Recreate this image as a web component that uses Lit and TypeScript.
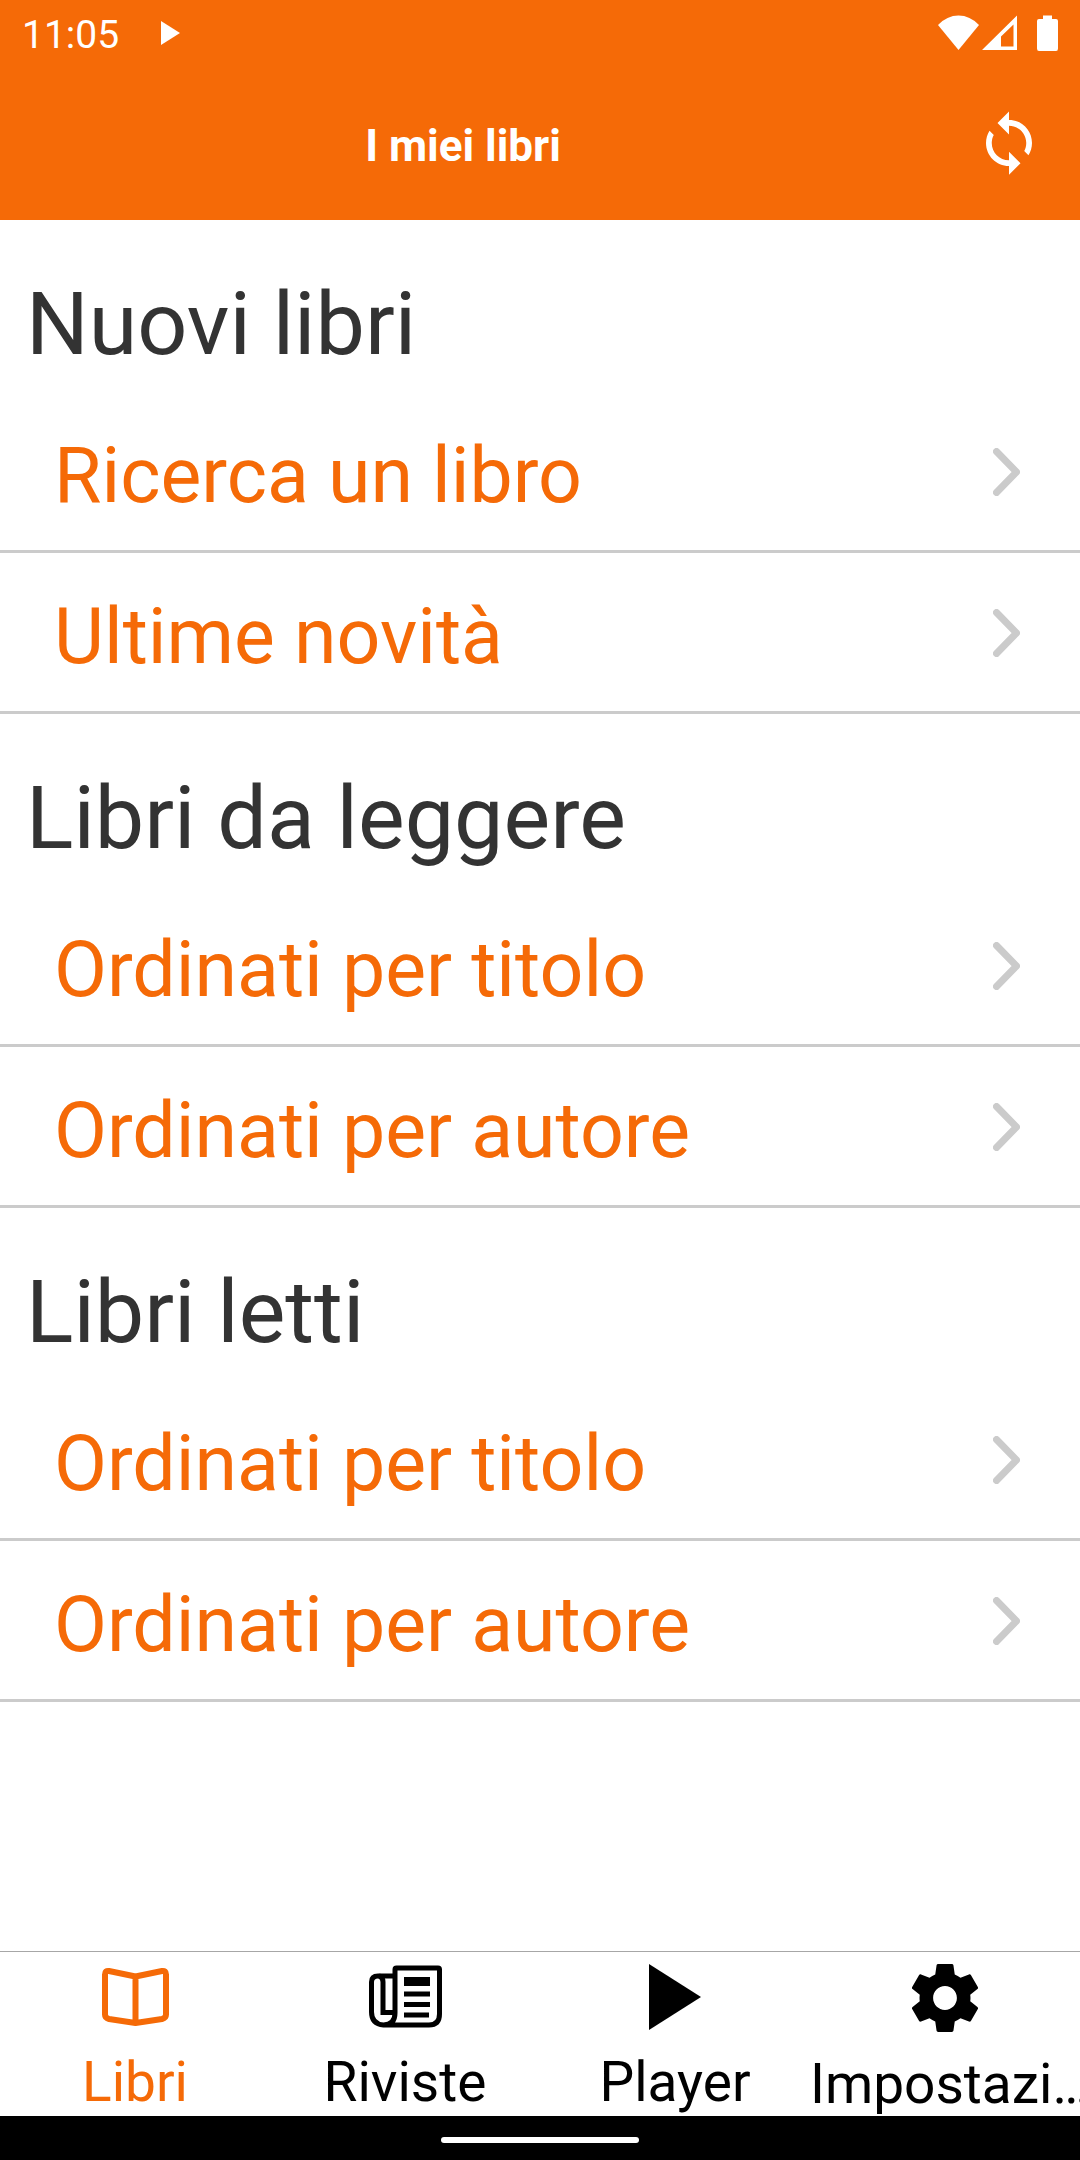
import { LitElement, html, css } from "lit";
import { customElement, state } from "lit/decorators.js";

interface Section {
  title: string;
  items: string[];
}

const SECTIONS: Section[] = [
  { title: "Nuovi libri", items: ["Ricerca un libro", "Ultime novità"] },
  { title: "Libri da leggere", items: ["Ordinati per titolo", "Ordinati per autore"] },
  { title: "Libri letti", items: ["Ordinati per titolo", "Ordinati per autore"] },
];

const bookIcon = html`<svg width="67" height="68" viewBox="0 0 67 68" fill="none" stroke="currentColor" stroke-width="6" stroke-linejoin="round" aria-hidden="true">
  <path d="M33.500 13.500 L7 8 Q3 7.500 3 11.500 V51.500 Q3 55 7 56 L33.500 60 L60 56 Q64 55 64 51.500 V11.500 Q64 7.500 60 8 Z M33.500 13.500 V60"/>
</svg>`;

const newsIcon = html`<svg width="73" height="68" viewBox="0 0 73 68" fill="none" stroke="currentColor" stroke-width="5" aria-hidden="true">
  <path d="M26 13 V6.500 Q26 5 27.500 5 H69 Q70.500 5 70.500 6.500 V51 Q70.500 62 60 62 H14.500 Q2.500 61 2.500 49 V19 Q2.500 13 9 13 H26 V50 Q26 61.500 14.500 62"/>
  <path d="M10 13 Q14 14 14 19 V49.500 H26"/>
  <path d="M35 18.500 H61" stroke-width="9"/>
  <path d="M35 31 H61 M35 41.500 H61 M35 52 H60"/>
</svg>`;

const playIcon = html`<svg width="52" height="68" viewBox="0 0 52 68" fill="currentColor" aria-hidden="true">
  <path d="M0 1 L52 34 L0 67 Z"/>
</svg>`;

const gearIcon = html`<svg width="68" height="70" viewBox="2 1.700 20 20.600" fill="currentColor" aria-hidden="true">
  <path d="M19.430 12.980c.04-.32.07-.64.07-.98s-.03-.66-.07-.98l2.110-1.650c.19-.15.24-.42.12-.64l-2-3.460c-.12-.22-.39-.3-.61-.22l-2.490 1c-.52-.4-1.080-.73-1.690-.98l-.38-2.650C14.460 2.180 14.250 2 14 2h-4c-.25 0-.46.18-.49.42l-.38 2.650c-.61.25-1.170.59-1.690.98l-2.490-1c-.23-.09-.49 0-.61.22l-2 3.460c-.13.22-.07.49.12.64l2.110 1.650c-.04.32-.07.65-.07.98s.03.66.07.98l-2.110 1.650c-.19.15-.24.42-.12.64l2 3.460c.12.22.39.3.61.22l2.490-1c.52.4 1.080.73 1.690.98l.38 2.650c.03.24.24.42.49.42h4c.25 0 .46-.18.49-.42l.38-2.650c.61-.25 1.170-.59 1.690-.98l2.490 1c.23.09.49 0 .61-.22l2-3.460c.12-.22.07-.49-.12-.64l-2.110-1.650zM12 15.500c-1.930 0-3.500-1.570-3.500-3.500s1.570-3.500 3.500-3.500 3.500 1.570 3.500 3.500-1.570 3.500-3.500 3.500z"/>
</svg>`;

const TABS = [
  { label: "Libri", icon: bookIcon },
  { label: "Riviste", icon: newsIcon },
  { label: "Player", icon: playIcon },
  { label: "Impostazi…", icon: gearIcon },
];

@customElement("status-bar")
class StatusBar extends LitElement {
  static styles = css`
    :host {
      display: flex;
      align-items: center;
      height: 66px;
      padding: 0 22px;
      font-size: 39px;
      line-height: 48px;
    }
    .clock {
      padding-top: 3px;
    }
    .play {
      margin-left: 42px;
    }
    .signals {
      display: flex;
      margin-left: auto;
    }
    svg {
      display: block;
    }
  `;

  render() {
    return html`
      <span class="clock">11:05</span>
      <svg class="play" width="20" height="24" viewBox="0 0 20 24" fill="currentColor" aria-hidden="true"><path d="M0 0 L19 12 L0 24 Z"/></svg>
      <svg class="signals" width="121" height="36" viewBox="0 0 121 36" fill="currentColor" aria-hidden="true">
        <path d="M1 10 Q10 0.500 21.500 0.500 Q33 0.500 42 10 L21.500 35 Z"/>
        <path fill-rule="evenodd" d="M45 35 L80 0.500 V35 Z M64 21.500 V31.500 H76.500 V9.500 Z"/>
        <path d="M106 0.500 H115 V4 H119 Q121 4 121 6 V33.500 Q121 36 119 36 H102 Q100 36 100 33.500 V6 Q100 4 102 4 H106 Z"/>
      </svg>
    `;
  }
}

@customElement("book-section")
class BookSection extends LitElement {
  static properties = { section: { attribute: false } };
  declare section: Section;

  static styles = css`
    :host {
      display: block;
    }
    .title {
      margin: 0;
      padding: 52px 26px 16px;
      font-size: 88px;
      line-height: 104px;
      font-weight: 400;
      color: #333;
    }
    .list {
      margin: 0;
      padding: 0;
      list-style: none;
    }
    .row {
      display: flex;
      align-items: center;
      justify-content: space-between;
      padding: 39px 60px 29px 54px;
      border-bottom: 3px solid #cbcbcb;
      font-size: 77px;
      line-height: 90px;
      color: #f56a07;
      text-decoration: none;
    }
    .chevron {
      flex: none;
      margin-bottom: 8px;
    }
  `;

  render() {
    return html`
      <h2 class="title">${this.section.title}</h2>
      <ul class="list">
        ${this.section.items.map(
          (item) => html`<li>
            <a class="row" href="#">
              <span>${item}</span>
              <svg class="chevron" width="27" height="48" viewBox="0 0 27 48" fill="none" stroke="#cbcbcb" stroke-width="7" stroke-linecap="round" stroke-linejoin="round" aria-hidden="true">
                <path d="M3.500 3.500 L23.500 24 L3.500 44.500"/>
              </svg>
            </a>
          </li>`
        )}
      </ul>
    `;
  }
}

@customElement("app-root")
class AppRoot extends LitElement {
  @state() active = 0;

  static styles = css`
    :host {
      display: flex;
      flex-direction: column;
      min-height: 100vh;
      background: #fff;
      font-family: Roboto, "Liberation Sans", sans-serif;
    }
    .header {
      background: #f56a07;
      color: #fff;
    }
    .toolbar {
      display: grid;
      grid-template-columns: 1fr auto;
      align-items: center;
      box-sizing: border-box;
      height: 154px;
      padding: 6px 44px 0 0;
    }
    .heading {
      margin: 0;
      padding-right: 56px;
      font-size: 44px;
      line-height: 52px;
      font-weight: 700;
      text-align: center;
    }
    .sync {
      display: flex;
      padding: 0 4px 6px;
      border: 0;
      background: none;
      color: inherit;
    }
    .main {
      flex: 1;
    }
    .tabs {
      display: grid;
      grid-template-columns: repeat(4, minmax(0, 1fr));
      height: 164px;
      border-top: 1px solid #a7a7a7;
    }
    .tab {
      display: flex;
      flex-direction: column;
      align-items: center;
      gap: 19px;
      padding: 11px 0 0;
      border: 0;
      background: none;
      color: #000;
      font: 400 55px/64px Roboto, "Liberation Sans", sans-serif;
    }
    .tab.active {
      color: #f56a07;
    }
    .tab svg {
      flex: none;
    }
    .label {
      max-width: 100%;
      overflow: hidden;
      text-align: left;
      white-space: nowrap;
    }
    .gesture {
      display: flex;
      align-items: center;
      justify-content: center;
      height: 44px;
      padding-top: 4px;
      box-sizing: border-box;
      background: #000;
    }
    .pill {
      width: 198px;
      height: 6px;
      border-radius: 3px;
      background: #fff;
    }
  `;

  render() {
    return html`
      <header class="header">
        <status-bar></status-bar>
        <div class="toolbar">
          <h1 class="heading">I miei libri</h1>
          <button class="sync" aria-label="Sincronizza">
            <svg width="46" height="64" viewBox="4 1 16 22" fill="currentColor" aria-hidden="true">
              <path d="M12 4V1L8 5l4 4V6c3.310 0 6 2.690 6 6 0 1.010-.25 1.970-.7 2.800l1.460 1.460C19.540 15.030 20 13.570 20 12c0-4.420-3.580-8-8-8zm0 14c-3.310 0-6-2.690-6-6 0-1.010.25-1.970.7-2.800L5.240 7.740C4.460 8.970 4 10.430 4 12c0 4.420 3.580 8 8 8v3l4-4-4-4v3z"/>
            </svg>
          </button>
        </div>
      </header>
      <main class="main">
        ${SECTIONS.map((s) => html`<book-section .section=${s}></book-section>`)}
      </main>
      <nav class="tabs">
        ${TABS.map(
          (tab, i) => html`<button class="tab ${i === this.active ? "active" : ""}" @click=${() => (this.active = i)}>
            ${tab.icon}<span class="label">${tab.label}</span>
          </button>`
        )}
      </nav>
      <div class="gesture"><div class="pill"></div></div>
    `;
  }
}
